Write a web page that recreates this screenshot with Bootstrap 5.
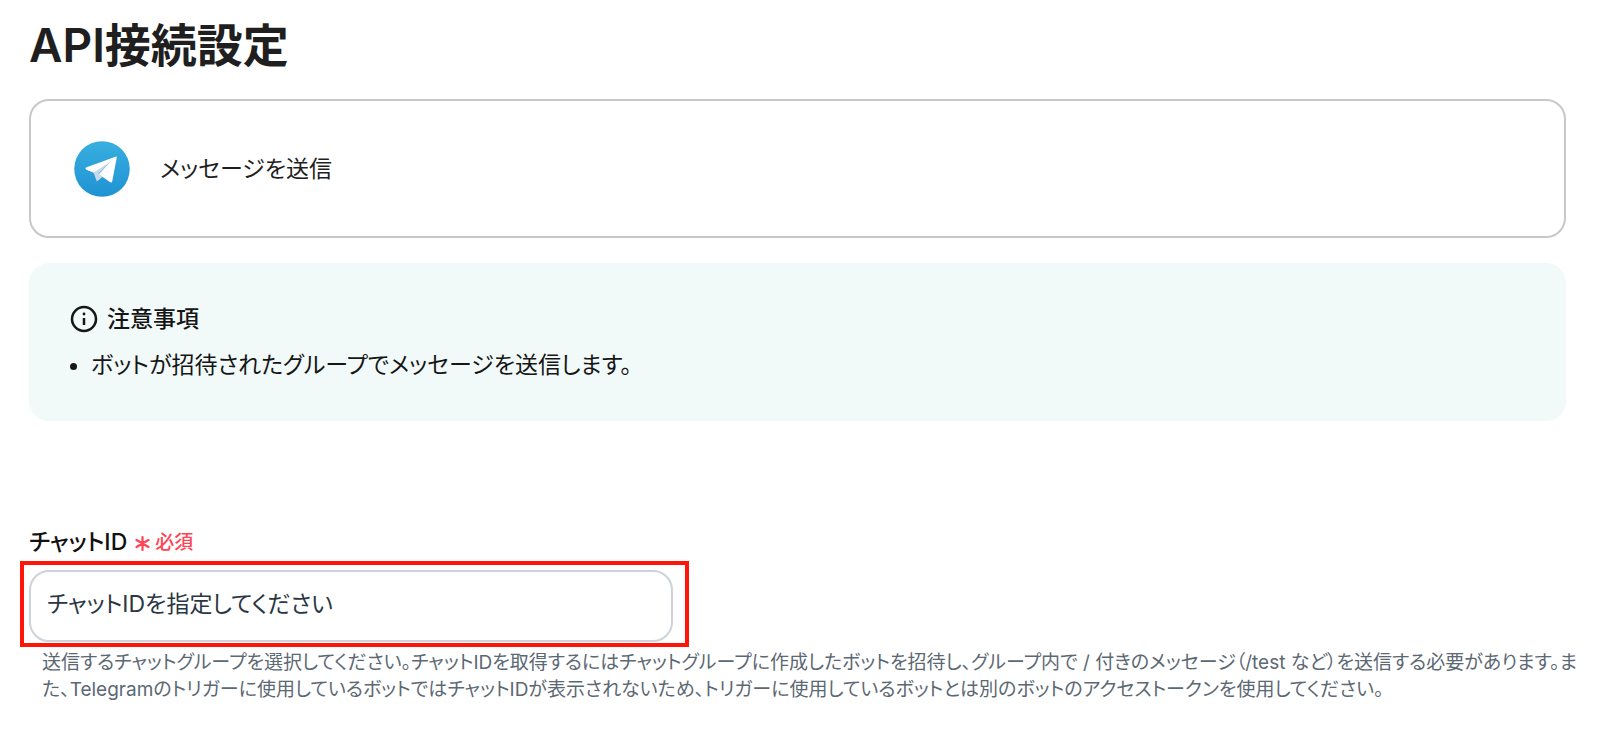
<!DOCTYPE html>
<html lang="ja">
<head>
<meta charset="utf-8">
<meta name="viewport" content="width=device-width, initial-scale=1">
<title>API接続設定</title>
<link href="https://cdn.jsdelivr.net/npm/bootstrap@5.3.0/dist/css/bootstrap.min.css" rel="stylesheet">
<style>
  body {
    font-family: Inter, "Noto Sans CJK JP", sans-serif;
    font-feature-settings: "palt";
    font-size: 23px;
    line-height: 32px;
    color: #1f1f1f;
    background: #fff;
  }
  .settings-page { padding: 15px 34px 32px 29px; }
  .page-title { font-size: 46px; line-height: 60px; font-weight: 600; margin-bottom: 24px; }
  .action-card { border: 2px solid #c8c8c8; border-radius: 20px; padding: 39px 43px; gap: 30px; min-height: 139px; }
  .notice { background: #f1faf9; border-radius: 20px; margin-top: 25px; padding: 40px 41px; color: #161616; min-height: 158px; }
  .notice-title { font-size: 23px; line-height: 32px; font-weight: 500; gap: 9px; margin-bottom: 14px; }
  .notice-list { padding-left: 21px; }
  .chat-field { margin-top: 104px; }
  .field-title { font-size: 23px; line-height: 32px; font-weight: 500; color: #111; }
  .required-mark { font-size: 19px; font-weight: 500; color: #ff4456; gap: 5px; padding-top: 2px; }
  .highlight-frame { width: 669px; max-width: 100%; border: 4px solid #ff1408; padding: 5px 12px 1px 5px; margin: 2px 0 0 -9px; }
  .chat-input { height: 72px; font-size: 23px; font-feature-settings: inherit; color: #2b3644; border: 2px solid #cdd3db; border-radius: 20px; padding: 0 16px 4px; }
  .chat-input::placeholder { color: #2b3644; opacity: 1; }
  .help-text { font-size: 19px; line-height: 27px; color: #5c6873; margin: 2px -16px 0 13px; }
</style>
</head>
<body>
<main class="settings-page">
  <h1 class="page-title">API接続設定</h1>

  <section class="action-card d-flex align-items-center">
    <svg width="56" height="56" viewBox="0 0 240 240" aria-hidden="true">
      <defs><linearGradient id="sky" x1="0" y1="0" x2="0" y2="1"><stop offset="0" stop-color="#38aee0"/><stop offset="1" stop-color="#1f93d2"/></linearGradient></defs>
      <circle cx="120" cy="120" r="119" fill="url(#sky)"/>
      <path fill="#c8daea" d="M52 122L84 136L98 174L122 154L104 140L178 68Z"/>
      <path fill="#fff" d="M178 67L54 113c-7 3-6 8 0 10l30 12 74-48-52 55 48 34c5 3 9 1 10-5l19-98c1-6-1-8-5-6z"/>
    </svg>
    <span>メッセージを送信</span>
  </section>

  <section class="notice">
    <h2 class="notice-title d-flex align-items-center">
      <svg width="28" height="28" viewBox="0 0 28 28" fill="none" stroke="currentColor" stroke-width="2.5" aria-hidden="true">
        <circle cx="14" cy="14" r="12"/><path d="M14 13v7"/><circle cx="14" cy="9" r="1.4" fill="currentColor" stroke="none"/>
      </svg>
      <span>注意事項</span>
    </h2>
    <ul class="notice-list mb-0"><li>ボットが招待されたグループでメッセージを送信します。</li></ul>
  </section>

  <section class="chat-field">
    <div class="d-flex align-items-center gap-2">
      <label class="field-title" for="chat-id">チャットID</label>
      <span class="required-mark d-flex align-items-center">
        <svg width="15" height="16" viewBox="0 0 15 16" stroke="currentColor" stroke-width="2.2" stroke-linecap="round" aria-hidden="true"><path d="M7.500 2v13M1.500 5l12 7M13.500 5l-12 7"/></svg>
        <span>必須</span>
      </span>
    </div>
    <div class="highlight-frame">
      <input class="form-control chat-input" type="text" id="chat-id" placeholder="チャットIDを指定してください" aria-describedby="chat-help">
    </div>
    <p class="help-text" id="chat-help">送信するチャットグループを選択してください。チャットIDを取得するにはチャットグループに作成したボットを招待し、グループ内で / 付きのメッセージ（/test など）を送信する必要があります。また、Telegramのトリガーに使用しているボットではチャットIDが表示されないため、トリガーに使用しているボットとは別のボットのアクセストークンを使用してください。</p>
  </section>
</main>
<script src="https://cdn.jsdelivr.net/npm/bootstrap@5.3.0/dist/js/bootstrap.bundle.min.js"></script>
</body>
</html>
